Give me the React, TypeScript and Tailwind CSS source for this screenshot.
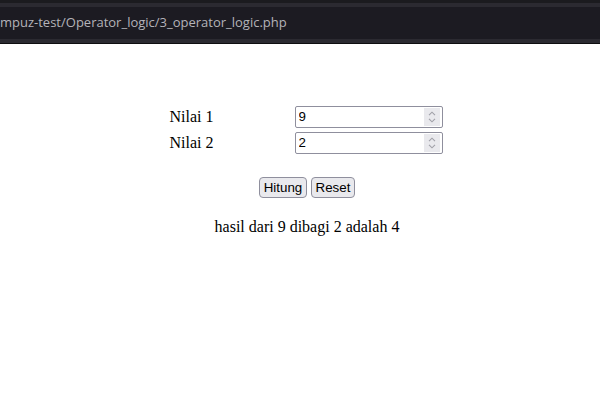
import React from 'react';

// ─── Number input (Firefox look) ──────────────────────────────────────────────
function NumberBox({ value }: { value: string }) {
  return (
    <div className="flex items-center w-[148px] h-[22px] border border-[#8f8f9d] rounded-[2px] bg-white pl-[3px] pr-[2px]">
      <input
        type="text"
        defaultValue={value}
        className="flex-1 min-w-0 outline-none bg-transparent text-[13.33px] text-black font-['Liberation_Sans',Arial,sans-serif]"
      />
      <div className="w-[16px] h-[18px] bg-[#e9e9ed] flex flex-col items-center justify-center gap-[2px]">
        <svg width="8" height="5" viewBox="0 0 8 5">
          <path d="M1 4.2 L4 1.2 L7 4.2" fill="none" stroke="#a0a0a8" strokeWidth="1.1" />
        </svg>
        <svg width="8" height="5" viewBox="0 0 8 5">
          <path d="M1 0.8 L4 3.8 L7 0.8" fill="none" stroke="#a0a0a8" strokeWidth="1.1" />
        </svg>
      </div>
    </div>
  );
}

function Button({ label, width }: { label: string; width: string }) {
  return (
    <button
      className={`${width} h-[21px] border border-[#8f8f9d] rounded-[4px] bg-[#e9e9ed] text-[13.33px] text-black leading-none font-['Liberation_Sans',Arial,sans-serif]`}
    >
      {label}
    </button>
  );
}

export default function App() {
  return (
    <div className="w-[600px] h-[409px] bg-white overflow-hidden">
      {/* Browser address strip */}
      <div className="h-[44px] flex flex-col bg-[#1c1b22]">
        <div className="h-[3px] bg-[#1b1b1f]" />
        <div className="h-[4px] bg-[#2b2a31]" />
        <div className="flex-1 flex items-center overflow-hidden">
          <span className="text-[13px] text-[#b4b3b9] whitespace-nowrap font-['Open_Sans','Noto_Sans',sans-serif]">
            mpuz-test/Operator_logic/3_operator_logic.php
          </span>
        </div>
        <div className="h-[4px] bg-[#2b2a31]" />
        <div className="h-[1px] bg-[#0e0e10]" />
      </div>

      {/* Form */}
      <div className="flex flex-col items-center pl-[12px] pt-[62px] font-['Liberation_Serif','Times_New_Roman',serif] text-[16px] text-black">
        <div className="flex flex-col gap-[4px]">
          <div className="flex items-center">
            <span className="w-[125px] leading-[22px]">Nilai 1</span>
            <NumberBox value="9" />
          </div>
          <div className="flex items-center">
            <span className="w-[125px] leading-[22px]">Nilai 2</span>
            <NumberBox value="2" />
          </div>
        </div>

        <div className="flex gap-[4px] mt-[23px] ml-[2px]">
          <Button label="Hitung" width="w-[48px]" />
          <Button label="Reset" width="w-[44px]" />
        </div>

        <p className="mt-[20px] ml-[2px] leading-[18px]">hasil dari 9 dibagi 2 adalah 4</p>
      </div>
    </div>
  );
}
